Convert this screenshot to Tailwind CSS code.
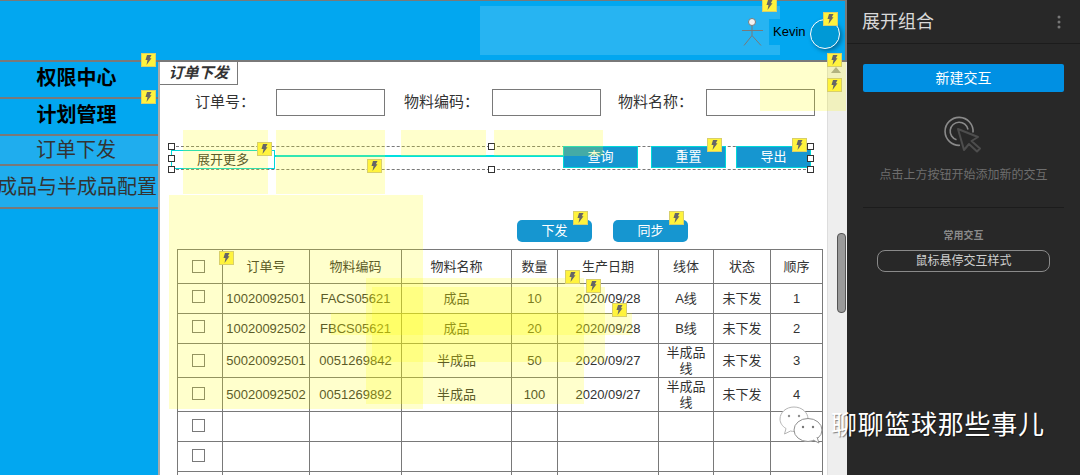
<!DOCTYPE html>
<html lang="zh">
<head>
<meta charset="utf-8">
<script src="https://cdn.jsdelivr.net/npm/@tailwindcss/browser@4"></script>
</head>
<body class="m-0 bg-white">
<div class="relative w-[1080px] h-[475px] overflow-hidden flex font-['Liberation_Sans','Noto_Sans_CJK_SC',sans-serif] text-[#333]">

  <!-- prototype canvas -->
  <div class="w-[847px] h-[475px] flex flex-col bg-[#02a7f0] shrink-0">
    <header class="relative h-[62px] shrink-0 border-t border-b-2 border-r-2 border-[#797979] bg-[#02a7f0]">
      <div class="absolute left-[480px] top-[5px] w-[300px] h-[49px] bg-white/15"></div>
      <div class="absolute left-[769px] top-[18px] w-[40px] h-[26px] bg-[#02a7f0] flex items-center pl-[4px] text-[13px] text-black">Kevin</div>
      <svg class="absolute left-[740px] top-[16px]" width="25" height="32" viewBox="0 0 25 32" fill="none" stroke="#797979" stroke-width="1"><circle cx="12" cy="5" r="3.5" fill="#f2f2f2"/><path d="M12 9V18.5M2 13.5H23M12 18.5L4 28.5M12 18.5L21 28.5"/></svg>
      <div class="absolute left-[810px] top-[18px] w-[30px] h-[30px] rounded-full bg-[#0099d6] border border-white shadow-[2px_2px_4px_rgba(0,0,0,0.35)]"></div>
    </header>

    <div class="flex flex-1 min-h-0">
      <nav class="w-[158px] shrink-0 flex flex-col bg-[#02a7f0] overflow-hidden">
        <div class="h-[37px] shrink-0 border-b-2 border-[#797979] flex items-center justify-center pr-[5px] pb-[4px] text-[20px] font-bold text-black">权限中心</div>
        <div class="h-[37px] shrink-0 border-b-2 border-[#797979] flex items-center justify-center pr-[5px] pb-[4px] text-[20px] font-bold text-black">计划管理</div>
        <div class="h-[30px] shrink-0 border-b-2 border-[#797979] bg-[#1fadee] flex items-center justify-center pr-[6px] text-[20px] text-[#333]">订单下发</div>
        <div class="h-[43px] shrink-0 border-b-2 border-[#797979] bg-[#1fadee] flex items-center justify-center pr-[4px] text-[20px] text-[#333] whitespace-nowrap">成品与半成品配置</div>
      </nav>

      <main class="w-[669px] shrink-0 border-l-2 border-[#aaaaaa] bg-white overflow-hidden">
        <div class="w-[78px] h-[23px] border-r border-b border-[#797979] flex items-center justify-center text-[15px] font-bold italic">订单下发</div>

        <div class="flex items-center h-[27px] mt-[4px] text-[15px]">
          <span class="w-[116px] pl-[35px] whitespace-nowrap">订单号：</span>
          <div class="w-[109px] h-[27px] border border-[#797979] bg-white"></div>
          <span class="w-[107px] pl-[19px] whitespace-nowrap">物料编码：</span>
          <div class="w-[109px] h-[27px] border border-[#797979] bg-white"></div>
          <span class="w-[105px] pl-[17px] whitespace-nowrap">物料名称：</span>
          <div class="w-[109px] h-[27px] border border-[#797979] bg-white"></div>
        </div>

        <div class="relative flex w-[640px] h-[24px] ml-[11px] mt-[30px] border-y border-dashed border-[#797979]">
          <div class="w-[104px] h-[19px] mt-[3px] border border-[#00d8d8] bg-white flex items-center justify-center text-[13px] shrink-0">展开更多</div>
          <div class="flex-1 h-[2px] mt-[8px] bg-[#00e0e0]"></div>
          <div class="w-[75px] h-[22px] -mt-px border border-[#00d8d8] bg-[#1696d0] text-white text-[13px] flex items-center justify-center shrink-0">查询</div>
          <div class="w-[75px] h-[22px] -mt-px ml-[13px] border border-[#00d8d8] bg-[#1696d0] text-white text-[13px] flex items-center justify-center shrink-0">重置</div>
          <div class="w-[75px] h-[22px] -mt-px ml-[10px] border border-[#00d8d8] bg-[#1696d0] text-white text-[13px] flex items-center justify-center shrink-0">导出</div>

          <span class="absolute left-[-3px] top-[-4px] w-[7px] h-[7px] border border-[#333] bg-white"></span>
          <span class="absolute left-[-3px] top-[8px] w-[7px] h-[7px] border border-[#333] bg-white"></span>
          <span class="absolute left-[-3px] top-[19px] w-[7px] h-[7px] border border-[#333] bg-white"></span>
          <span class="absolute left-[317px] top-[-4px] w-[7px] h-[7px] border border-[#333] bg-white"></span>
          <span class="absolute left-[317px] top-[19px] w-[7px] h-[7px] border border-[#333] bg-white"></span>
          <span class="absolute left-[636px] top-[-4px] w-[7px] h-[7px] border border-[#333] bg-white"></span>
          <span class="absolute left-[636px] top-[8px] w-[7px] h-[7px] border border-[#333] bg-white"></span>
          <span class="absolute left-[636px] top-[19px] w-[7px] h-[7px] border border-[#333] bg-white"></span>
        </div>

        <div class="flex ml-[357px] mt-[50px] gap-[21px]">
          <div class="w-[75px] h-[22px] rounded-[5px] bg-[#1696d0] text-white text-[13px] flex items-center justify-center">下发</div>
          <div class="w-[75px] h-[22px] rounded-[5px] bg-[#1696d0] text-white text-[13px] flex items-center justify-center">同步</div>
        </div>

        <table class="ml-[17px] mt-[7px] w-[645px] table-fixed border-collapse text-[13px] text-center text-[#333] leading-[16px]">
          <colgroup>
            <col class="w-[45px]"><col class="w-[87px]"><col class="w-[92px]"><col class="w-[110px]"><col class="w-[46px]"><col class="w-[101px]"><col class="w-[55px]"><col class="w-[57px]"><col class="w-[52px]">
          </colgroup>
          <tr class="h-[34px]">
            <td class="border border-[#797979] p-0"><div class="w-[13px] h-[13px] ml-[14px] border border-[#797979]"></div></td>
            <td class="border border-[#797979] p-0">订单号</td><td class="border border-[#797979] p-0">物料编码</td><td class="border border-[#797979] p-0">物料名称</td><td class="border border-[#797979] p-0">数量</td><td class="border border-[#797979] p-0">生产日期</td><td class="border border-[#797979] p-0">线体</td><td class="border border-[#797979] p-0">状态</td><td class="border border-[#797979] p-0">顺序</td>
          </tr>
          <tr class="h-[30px]">
            <td class="border border-[#797979] p-0"><div class="w-[13px] h-[13px] ml-[14px] mb-[4px] border border-[#797979]"></div></td>
            <td class="border border-[#797979] p-0">10020092501</td><td class="border border-[#797979] p-0">FACS05621</td><td class="border border-[#797979] p-0">成品</td><td class="border border-[#797979] p-0">10</td><td class="border border-[#797979] p-0">2020/09/28</td><td class="border border-[#797979] p-0">A线</td><td class="border border-[#797979] p-0">未下发</td><td class="border border-[#797979] p-0">1</td>
          </tr>
          <tr class="h-[30px]">
            <td class="border border-[#797979] p-0"><div class="w-[13px] h-[13px] ml-[14px] mb-[5px] border border-[#797979]"></div></td>
            <td class="border border-[#797979] p-0">10020092502</td><td class="border border-[#797979] p-0">FBCS05621</td><td class="border border-[#797979] p-0">成品</td><td class="border border-[#797979] p-0">20</td><td class="border border-[#797979] p-0">2020/09/28</td><td class="border border-[#797979] p-0">B线</td><td class="border border-[#797979] p-0">未下发</td><td class="border border-[#797979] p-0">2</td>
          </tr>
          <tr class="h-[34px]">
            <td class="border border-[#797979] p-0"><div class="w-[13px] h-[13px] ml-[14px] border border-[#797979]"></div></td>
            <td class="border border-[#797979] p-0">50020092501</td><td class="border border-[#797979] p-0">0051269842</td><td class="border border-[#797979] p-0">半成品</td><td class="border border-[#797979] p-0">50</td><td class="border border-[#797979] p-0">2020/09/27</td><td class="border border-[#797979] p-0 px-1">半成品线</td><td class="border border-[#797979] p-0">未下发</td><td class="border border-[#797979] p-0">3</td>
          </tr>
          <tr class="h-[34px]">
            <td class="border border-[#797979] p-0"><div class="w-[13px] h-[13px] ml-[14px] mb-[2px] border border-[#797979]"></div></td>
            <td class="border border-[#797979] p-0">50020092502</td><td class="border border-[#797979] p-0">0051269892</td><td class="border border-[#797979] p-0">半成品</td><td class="border border-[#797979] p-0">100</td><td class="border border-[#797979] p-0">2020/09/27</td><td class="border border-[#797979] p-0 px-1">半成品线</td><td class="border border-[#797979] p-0">未下发</td><td class="border border-[#797979] p-0">4</td>
          </tr>
          <tr class="h-[30px]">
            <td class="border border-[#797979] p-0"><div class="w-[13px] h-[13px] ml-[14px] mb-[2px] border border-[#797979]"></div></td>
            <td class="border border-[#797979] p-0"></td><td class="border border-[#797979] p-0"></td><td class="border border-[#797979] p-0"></td><td class="border border-[#797979] p-0"></td><td class="border border-[#797979] p-0"></td><td class="border border-[#797979] p-0"></td><td class="border border-[#797979] p-0"></td><td class="border border-[#797979] p-0"></td>
          </tr>
          <tr class="h-[30px]">
            <td class="border border-[#797979] p-0"><div class="w-[13px] h-[13px] ml-[14px] mb-[2px] border border-[#797979]"></div></td>
            <td class="border border-[#797979] p-0"></td><td class="border border-[#797979] p-0"></td><td class="border border-[#797979] p-0"></td><td class="border border-[#797979] p-0"></td><td class="border border-[#797979] p-0"></td><td class="border border-[#797979] p-0"></td><td class="border border-[#797979] p-0"></td><td class="border border-[#797979] p-0"></td>
          </tr>
          <tr class="h-[30px]">
            <td class="border border-[#797979] p-0"></td><td class="border border-[#797979] p-0"></td><td class="border border-[#797979] p-0"></td><td class="border border-[#797979] p-0"></td><td class="border border-[#797979] p-0"></td><td class="border border-[#797979] p-0"></td><td class="border border-[#797979] p-0"></td><td class="border border-[#797979] p-0"></td><td class="border border-[#797979] p-0"></td>
          </tr>
        </table>
      </main>

      <div class="relative flex-1 bg-[#eeeeee] border-l border-[#dddddd]">
        <svg class="absolute left-[2px] top-[5px]" width="12" height="7" viewBox="0 0 12 7"><path d="M6 0L11 6H1Z" fill="#a0a0a0"/></svg>
        <div class="absolute left-[9px] top-[171px] w-[9px] h-[80px] rounded-[4px] bg-[#9a9a9a] border border-[#555555]"></div>
      </div>
    </div>
  </div>

  <!-- interaction panel -->
  <aside class="w-[233px] h-[475px] shrink-0 bg-[#282828] flex flex-col">
    <div class="h-[44px] shrink-0 border-b border-[#1c1c1c] flex items-center justify-between pl-[15px] pr-[19px]">
      <span class="text-[18px] text-[#d9d9d9] pt-[2px]">展开组合</span>
      <svg width="4" height="14" viewBox="0 0 4 14" fill="#777777"><circle cx="2" cy="2" r="1.5"/><circle cx="2" cy="7" r="1.5"/><circle cx="2" cy="12" r="1.5"/></svg>
    </div>
    <div class="mx-[16px] mt-[20px] h-[28px] rounded-[2px] bg-[#0090e3] text-white text-[14px] flex items-center justify-center">新建交互</div>
    <svg class="ml-[97px] mt-[24px]" width="40" height="40" viewBox="0 0 40 40" fill="none">
      <path d="M16 29.3A14 14 0 1 1 29 16.5M12.5 23.8A9 9 0 1 1 24 13.5" stroke="#8a8a8a" stroke-width="1.6"/>
      <path d="M14 13L34 21L27.5 25L36 32.5L33 35.5L25 28L20 34Z" stroke="#4d4d4d" stroke-width="2" stroke-linejoin="round" fill="#282828"/>
    </svg>
    <div class="mt-[11px] text-center text-[12px] leading-[16px] text-[#6e6e6e]">点击上方按钮开始添加新的交互</div>
    <div class="mx-[16px] mt-[24px] h-px bg-[#1c1c1c]"></div>
    <div class="mt-[21px] text-center text-[10px] leading-[14px] font-bold text-[#8a8a8a]">常用交互</div>
    <div class="ml-[30px] mt-[7px] w-[173px] h-[22px] rounded-[8px] border border-[#8a8a8a] text-[12px] text-[#cfcfcf] flex items-center justify-center">鼠标悬停交互样式</div>
  </aside>

  <!-- yellow hover highlights over the canvas -->
  <div class="absolute left-[183px] top-[130px] w-[85px] h-[64px] bg-[#ffff00]/20 pointer-events-none"></div>
  <div class="absolute left-[276px] top-[130px] w-[109px] h-[64px] bg-[#ffff00]/20 pointer-events-none"></div>
  <div class="absolute left-[401px] top-[130px] w-[85px] h-[26px] bg-[#ffff00]/20 pointer-events-none"></div>
  <div class="absolute left-[494px] top-[130px] w-[109px] h-[26px] bg-[#ffff00]/20 pointer-events-none"></div>
  <div class="absolute left-[169px] top-[195px] w-[254px] h-[214px] bg-[#ffff00]/20 pointer-events-none"></div>
  <div class="absolute left-[760px] top-[62px] w-[86px] h-[49px] bg-[#ffff00]/20 pointer-events-none"></div>
  <div class="absolute left-[366px] top-[278px] w-[218px] h-[126px] bg-[#ffff00]/20 pointer-events-none"></div>
  <div class="absolute left-[372px] top-[287px] w-[233px] h-[75px] bg-[#ffff00]/20 pointer-events-none"></div>
  <div class="absolute left-[331px] top-[313px] w-[301px] h-[22px] bg-[#ffff00]/20 pointer-events-none"></div>

  <!-- interaction badges -->
  <div class="absolute left-[141px] top-[53px] w-[15px] h-[14px] bg-[#fff33d] border border-[#d8cf6a] flex items-center justify-center"><svg width="7" height="10" viewBox="0 0 7 10" fill="#666666"><path d="M2 0H6.5L4.8 3.2H6.5L1.5 10L2.5 5H0.5Z"/></svg></div>
  <div class="absolute left-[141px] top-[90px] w-[15px] h-[14px] bg-[#fff33d] border border-[#d8cf6a] flex items-center justify-center"><svg width="7" height="10" viewBox="0 0 7 10" fill="#666666"><path d="M2 0H6.5L4.8 3.2H6.5L1.5 10L2.5 5H0.5Z"/></svg></div>
  <div class="absolute left-[257px] top-[142px] w-[15px] h-[14px] bg-[#fff33d] border border-[#d8cf6a] flex items-center justify-center"><svg width="7" height="10" viewBox="0 0 7 10" fill="#666666"><path d="M2 0H6.5L4.8 3.2H6.5L1.5 10L2.5 5H0.5Z"/></svg></div>
  <div class="absolute left-[367px] top-[159px] w-[15px] h-[14px] bg-[#fff33d] border border-[#d8cf6a] flex items-center justify-center"><svg width="7" height="10" viewBox="0 0 7 10" fill="#666666"><path d="M2 0H6.5L4.8 3.2H6.5L1.5 10L2.5 5H0.5Z"/></svg></div>
  <div class="absolute left-[762px] top-[-2px] w-[15px] h-[14px] bg-[#fff33d] border border-[#d8cf6a] flex items-center justify-center"><svg width="7" height="10" viewBox="0 0 7 10" fill="#666666"><path d="M2 0H6.5L4.8 3.2H6.5L1.5 10L2.5 5H0.5Z"/></svg></div>
  <div class="absolute left-[823px] top-[12px] w-[15px] h-[14px] bg-[#fff33d] border border-[#d8cf6a] flex items-center justify-center"><svg width="7" height="10" viewBox="0 0 7 10" fill="#666666"><path d="M2 0H6.5L4.8 3.2H6.5L1.5 10L2.5 5H0.5Z"/></svg></div>
  <div class="absolute left-[827px] top-[53px] w-[15px] h-[14px] bg-[#fff33d] border border-[#d8cf6a] flex items-center justify-center"><svg width="7" height="10" viewBox="0 0 7 10" fill="#666666"><path d="M2 0H6.5L4.8 3.2H6.5L1.5 10L2.5 5H0.5Z"/></svg></div>
  <div class="absolute left-[827px] top-[78px] w-[15px] h-[14px] bg-[#fff33d] border border-[#d8cf6a] flex items-center justify-center"><svg width="7" height="10" viewBox="0 0 7 10" fill="#666666"><path d="M2 0H6.5L4.8 3.2H6.5L1.5 10L2.5 5H0.5Z"/></svg></div>
  <div class="absolute left-[707px] top-[138px] w-[15px] h-[14px] bg-[#fff33d] border border-[#d8cf6a] flex items-center justify-center"><svg width="7" height="10" viewBox="0 0 7 10" fill="#666666"><path d="M2 0H6.5L4.8 3.2H6.5L1.5 10L2.5 5H0.5Z"/></svg></div>
  <div class="absolute left-[792px] top-[138px] w-[15px] h-[14px] bg-[#fff33d] border border-[#d8cf6a] flex items-center justify-center"><svg width="7" height="10" viewBox="0 0 7 10" fill="#666666"><path d="M2 0H6.5L4.8 3.2H6.5L1.5 10L2.5 5H0.5Z"/></svg></div>
  <div class="absolute left-[573px] top-[211px] w-[15px] h-[14px] bg-[#fff33d] border border-[#d8cf6a] flex items-center justify-center"><svg width="7" height="10" viewBox="0 0 7 10" fill="#666666"><path d="M2 0H6.5L4.8 3.2H6.5L1.5 10L2.5 5H0.5Z"/></svg></div>
  <div class="absolute left-[669px] top-[211px] w-[15px] h-[14px] bg-[#fff33d] border border-[#d8cf6a] flex items-center justify-center"><svg width="7" height="10" viewBox="0 0 7 10" fill="#666666"><path d="M2 0H6.5L4.8 3.2H6.5L1.5 10L2.5 5H0.5Z"/></svg></div>
  <div class="absolute left-[219px] top-[251px] w-[15px] h-[14px] bg-[#fff33d] border border-[#d8cf6a] flex items-center justify-center"><svg width="7" height="10" viewBox="0 0 7 10" fill="#666666"><path d="M2 0H6.5L4.8 3.2H6.5L1.5 10L2.5 5H0.5Z"/></svg></div>
  <div class="absolute left-[565px] top-[270px] w-[15px] h-[14px] bg-[#fff33d] border border-[#d8cf6a] flex items-center justify-center"><svg width="7" height="10" viewBox="0 0 7 10" fill="#666666"><path d="M2 0H6.5L4.8 3.2H6.5L1.5 10L2.5 5H0.5Z"/></svg></div>
  <div class="absolute left-[586px] top-[279px] w-[15px] h-[14px] bg-[#fff33d] border border-[#d8cf6a] flex items-center justify-center"><svg width="7" height="10" viewBox="0 0 7 10" fill="#666666"><path d="M2 0H6.5L4.8 3.2H6.5L1.5 10L2.5 5H0.5Z"/></svg></div>
  <div class="absolute left-[612px] top-[303px] w-[15px] h-[14px] bg-[#fff33d] border border-[#d8cf6a] flex items-center justify-center"><svg width="7" height="10" viewBox="0 0 7 10" fill="#666666"><path d="M2 0H6.5L4.8 3.2H6.5L1.5 10L2.5 5H0.5Z"/></svg></div>

  <!-- watermark -->
  <div class="absolute left-[778px] top-[405px] flex items-center">
    <svg width="46" height="40" viewBox="0 0 46 40">
      <path d="M16 2C8 2 2 7.5 2 14C2 18 4.5 21.5 8 23.5L6.5 29L12.5 26C14 26.3 15 26.5 16 26.5C24 26.5 30 21 30 14C30 7.5 24 2 16 2Z" fill="#ffffff" stroke="#b5b5b5"/>
      <ellipse cx="30" cy="25" rx="14" ry="11.5" fill="#ffffff" stroke="#8f8f8f"/>
      <path d="M35 35L41 38L39 32" fill="#ffffff" stroke="#8f8f8f"/>
      <circle cx="11" cy="11" r="1.2" fill="#8f8f8f"/><circle cx="21" cy="11" r="1.2" fill="#8f8f8f"/>
      <circle cx="25" cy="22" r="1.2" fill="#777777"/><circle cx="35" cy="22" r="1.2" fill="#777777"/>
    </svg>
    <span class="ml-[7px] text-[26px] leading-[34px] tracking-[0.7px] text-white whitespace-nowrap [text-shadow:1px_1px_1px_rgba(0,0,0,0.45)]">聊聊篮球那些事儿</span>
  </div>
</div>
</body>
</html>
